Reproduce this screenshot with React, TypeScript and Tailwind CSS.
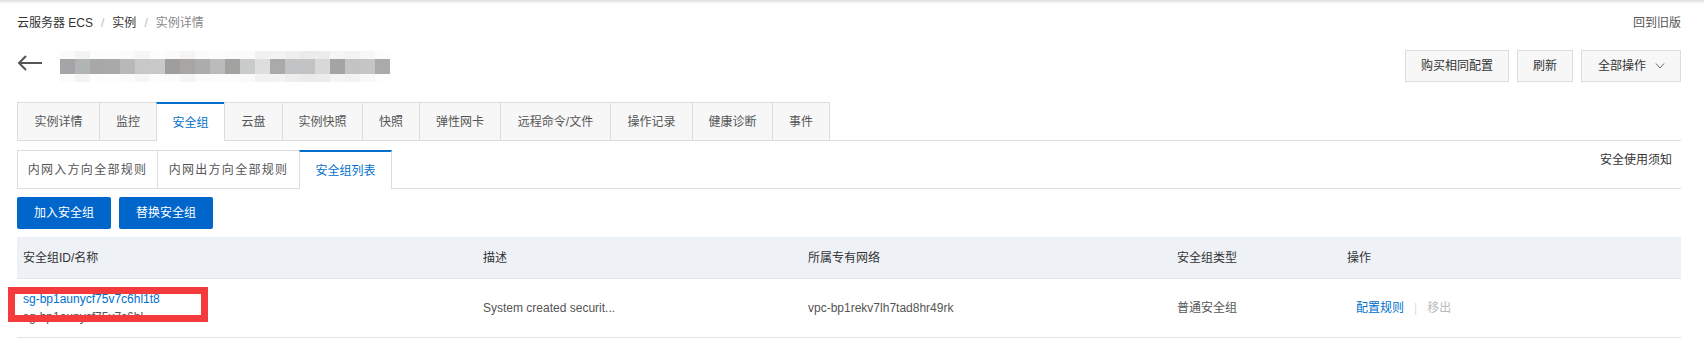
import React from 'react'

const mainTabs = [
  { label: '实例详情', w: 'w-[82px]' },
  { label: '监控', w: 'w-[57px]' },
  { label: '安全组', w: 'w-[68px]', active: true },
  { label: '云盘', w: 'w-[58px]' },
  { label: '实例快照', w: 'w-[80px]' },
  { label: '快照', w: 'w-[57px]' },
  { label: '弹性网卡', w: 'w-[81px]' },
  { label: '远程命令/文件', w: 'w-[110px]' },
  { label: '操作记录', w: 'w-[82px]' },
  { label: '健康诊断', w: 'w-[80px]' },
  { label: '事件', w: 'w-[58px]' },
]

const subTabs = [
  { label: '内网入方向全部规则', w: 'w-[140px]' },
  { label: '内网出方向全部规则', w: 'w-[142px]' },
  { label: '安全组列表', w: 'w-[93px]', active: true },
]

// blurred title, drawn as a mosaic
const mosaic = [
  '#a5a4a6', '#b0b4b4', '#a8a8a8', '#a9a9a9', '#b8b8b8', '#c8c8c8', '#c9c9c9', '#9e9e9e',
  '#a8a5a3', '#acacae', '#bbbbbb', '#a2a2a0', '#c9cbca', '#dedede', '#aaaaaa', '#c1c3c5',
  '#c3c3c3', '#d8d8d8', '#a4a4a4', '#c4c4c4', '#c5c5c5', '#a9abaa',
]
const mosaicTop = [
  '#fbfbfb', '#f4f4f4', '#fdfdfd', '#fdfdfd', '#fbfbfb', '#f6f6f6', '#fdfdfd', '#fbfbfb',
  '#f5f5f5', '#fbfbfb', '#fcfcfc', '#fbfbfb', '#fafafa', '#f1f1f1', '#f3f3f3', '#eeeeee',
  '#ebebeb', '#ececec', '#f5f5f5', '#f3f3f3', '#f8f8f8', '#fdfdfd',
]

function BackArrow() {
  return (
    <svg width="25" height="16" viewBox="0 0 25 16" fill="none" stroke="#555" strokeWidth="2">
      <path d="M2 8 H25" />
      <path d="M9 1 L2 8 L9 15" />
    </svg>
  )
}

export default function App() {
  return (
    <div className="w-[1704px] h-[358px] bg-white text-[12px] text-[#333] overflow-hidden" style={{ fontFamily: '"Liberation Sans", "Noto Sans CJK SC", sans-serif' }}>
      <div className="h-[4px] bg-gradient-to-b from-[#dedede] to-white" />
      <div className="pl-[17px] pr-[23px]">
        {/* breadcrumb */}
        <div className="pt-[9px] flex items-center justify-between leading-5">
          <div className="flex items-center">
            <span>云服务器 ECS</span>
            <span className="mx-[8px] text-[#bbb]">/</span>
            <span>实例</span>
            <span className="mx-[8px] text-[#bbb]">/</span>
            <span className="text-[#888]">实例详情</span>
          </div>
          <span className="text-[#555]">回到旧版</span>
        </div>

        {/* title row */}
        <div className="mt-[17px] h-8 flex items-center justify-between">
          <div className="flex items-center">
            <div className="-mt-[6px]">
              <BackArrow />
            </div>
            <div className="ml-[18px] flex flex-col">
              <div className="flex">
                {mosaicTop.map((c, i) => (
                  <div key={i} className="w-[15px] h-[8px]" style={{ backgroundColor: c }} />
                ))}
              </div>
              <div className="flex">
                {mosaic.map((c, i) => (
                  <div key={i} className="w-[15px] h-[15px]" style={{ backgroundColor: c }} />
                ))}
              </div>
              <div className="flex">
                {mosaicTop.map((c, i) => (
                  <div key={i} className="w-[15px] h-[8px]" style={{ backgroundColor: c }} />
                ))}
              </div>
            </div>
          </div>
          <div className="flex gap-2">
            <button className="h-8 w-[104px] border border-[#ddd] bg-[#f7f7f7] text-[#333]">购买相同配置</button>
            <button className="h-8 w-[56px] border border-[#ddd] bg-[#f7f7f7] text-[#333]">刷新</button>
            <button className="h-8 w-[100px] border border-[#ddd] bg-[#f7f7f7] text-[#333] flex items-center pl-[16px]">
              全部操作
              <svg className="ml-[9px]" width="10" height="6" viewBox="0 0 10 6" fill="none" stroke="#666" strokeWidth="1">
                <path d="M1 0.5 L5 5 L9 0.5" />
              </svg>
            </button>
          </div>
        </div>

        {/* main tabs */}
        <div className="mt-[20px] flex border-b border-[#ddd]">
          {mainTabs.map((t, i) => (
            <div
              key={t.label}
              className={`${t.w} h-[39px] -mb-px flex items-center justify-center border-l border-[#ddd] ${i === mainTabs.length - 1 ? 'border-r' : ''} ${t.active ? 'bg-white border-t-2 border-t-[#0070cc] text-[#0070cc]' : 'bg-[#f7f7f7] border-t border-b text-[#555]'}`}
            >
              {t.label}
            </div>
          ))}
        </div>

        {/* sub tabs */}
        <div className="mt-[9px] flex border-b border-[#ddd]">
          {subTabs.map((t, i) => (
            <div
              key={t.label}
              className={`${t.w} h-[39px] -mb-px flex items-center justify-center bg-white border-l border-[#ddd] ${i === subTabs.length - 1 ? 'border-r' : ''} ${t.active ? 'border-t-2 border-t-[#0070cc] text-[#0070cc]' : 'border-t border-b text-[#555]'}`}
            >
              <span className={t.active ? '' : 'tracking-[1.3px]'}>{t.label}</span>
            </div>
          ))}
          <span className="ml-auto self-start leading-5 pr-[9px] text-[#333]">安全使用须知</span>
        </div>

        {/* action buttons */}
        <div className="mt-[8px] flex gap-2">
          <button className="h-8 w-[94px] rounded-[2px] bg-[#0066cc] text-white">加入安全组</button>
          <button className="h-8 w-[94px] rounded-[2px] bg-[#0066cc] text-white">替换安全组</button>
        </div>

        {/* table */}
        <div className="mt-[8px]">
          <div className="flex h-[42px] items-center bg-[#eef2f7] border-b border-[#e3e5e8] text-[#333]">
            <div className="w-[460px] pl-[6px]">安全组ID/名称</div>
            <div className="w-[325px] pl-[6px]">描述</div>
            <div className="w-[369px] pl-[6px]">所属专有网络</div>
            <div className="w-[170px] pl-[6px]">安全组类型</div>
            <div className="flex-1 pl-[6px]">操作</div>
          </div>
          <div className="flex h-[59px] items-center border-b border-[#e3e3e3] text-[#555]">
            <div className="w-[460px] pl-[6px] relative leading-[18px]">
              <div className="text-[#0070cc]">sg-bp1aunycf75v7c6hl1t8</div>
              <div>sg-bp1aunycf75v7c6hl...</div>
              <div className="absolute left-[-9px] top-[-3px] w-[200px] h-[35px] border-[7px] border-[#f43a3a]" />
            </div>
            <div className="w-[325px] pl-[6px]">System created securit...</div>
            <div className="w-[369px] pl-[6px]">vpc-bp1rekv7lh7tad8hr49rk</div>
            <div className="w-[170px] pl-[6px]">普通安全组</div>
            <div className="flex-1 pl-[15px] flex items-center">
              <span className="text-[#0070cc]">配置规则</span>
              <span className="mx-[10px] text-[#ddd]">|</span>
              <span className="text-[#bbb]">移出</span>
            </div>
          </div>
        </div>
      </div>
    </div>
  )
}
